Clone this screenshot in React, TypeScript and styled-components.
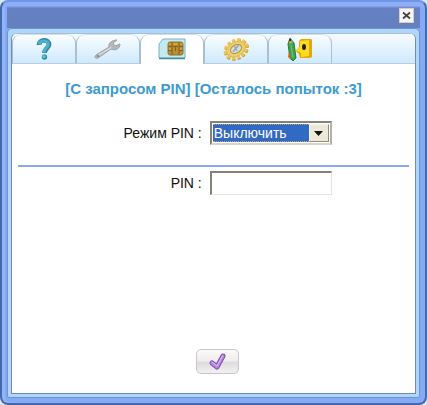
import React, { useState } from "react";
import styled, { createGlobalStyle } from "styled-components";

const GlobalStyle = createGlobalStyle`
  * { box-sizing: border-box; }
  html, body { margin: 0; background: #dfe6ee; }
  body, button, input, select { font-family: "Liberation Sans", Arial, sans-serif; }
`;

const Window = styled.main`
  display: flex;
  flex-direction: column;
  min-height: 100vh;
  padding: 0 5px 5px;
  border: 2px solid #416aaa;
  border-top-color: #6e96e4;
  border-radius: 8px;
  background: #86a9f5;
  box-shadow: inset 0 4px 1px #8eaef8, inset 3px 0 1px #94b4fa;
`;

const TitleBar = styled.header`
  display: flex;
  flex: none;
  align-items: flex-end;
  justify-content: flex-end;
  height: 26px;
  padding: 0 6px 5px;
  background: linear-gradient(#8eaef8 0, #8eaef8 4px, #6581c3 6px, #6480bf 100%);
`;

const CloseButton = styled.button`
  display: grid;
  place-items: center;
  width: 15px;
  height: 15px;
  padding: 0;
  border: 1px solid #d4d0c8;
  background: #f7f6f4;
`;

const Frame = styled.div`
  display: flex;
  flex: 1;
  flex-direction: column;
  padding: 4px 3px 3px;
  border: 1px solid #6f93d2;
  border-radius: 5px 5px 2px 2px;
  background: #afd7fb;
`;

const Panel = styled.div`
  display: flex;
  flex: 1;
  flex-direction: column;
  overflow: hidden;
  border: 1px solid #7788b4;
  border-top-color: #a9bfd0;
  border-radius: 6px 6px 0 0;
  background: #fff;
`;

const TabBar = styled.div`
  display: flex;
  flex: none;
  height: 30px;
  background: linear-gradient(#f5fbff, #cfe9fc);
  box-shadow: inset 0 -1px #b6cfe3;
`;

const Tab = styled.button<{ $active: boolean }>`
  display: grid;
  flex: 0 0 64px;
  place-items: center;
  padding: 0 0 1px;
  border: 1px solid #a9bfd2;
  border-top-color: #d3e0e9;
  border-bottom: ${(p) => (p.$active ? "0" : "1px solid #b6cfe3")};
  border-radius: 9px 9px 0 0;
  background: ${(p) => (p.$active ? "#fff" : "linear-gradient(#f9fdff, #cfe9fc)")};
`;

const Form = styled.form`
  display: flex;
  flex: 1;
  flex-direction: column;
  padding: 17px 6px 19px;
`;

const Heading = styled.h1`
  margin: 0 0 24px;
  color: #3d9bd0;
  font-size: 15px;
  font-weight: 700;
  line-height: 16px;
  text-align: center;
  white-space: nowrap;
`;

const Field = styled.div`
  display: grid;
  grid-template-columns: 47% 122px;
  column-gap: 8px;
  align-items: center;
`;

const Label = styled.label`
  color: #111;
  font-size: 14px;
  line-height: 20px;
  text-align: right;
  white-space: nowrap;
`;

const Divider = styled.hr`
  width: 100%;
  height: 2px;
  margin: 20px 0 4px;
  border: 0;
  background: #8ca8f0;
`;

const SelectBox = styled.div`
  display: grid;
  grid-template-columns: 1fr 20px;
  height: 24px;
  padding: 1px;
  border: 2px solid #858078;
  border-right-color: #b5b1a5;
  border-bottom-color: #d8d5c9;
  background: #fff;
`;

const Select = styled.select`
  grid-area: 1 / 1 / 2 / 3;
  width: 100%;
  height: 18px;
  padding: 0 22px 0 1px;
  border: 1px dotted #c2a468;
  border-width: 1px 0;
  outline: 0;
  border-radius: 0;
  appearance: none;
  background: #316ac5;
  color: #fff;
  font-size: 14px;
  line-height: 16px;
  option { background: #fff; color: #111; }
`;

const Arrow = styled.span`
  display: grid;
  grid-area: 1 / 2 / 2 / 3;
  place-items: center;
  height: 18px;
  border: 1px solid #f6f4ee;
  border-right-color: #918d82;
  border-bottom-color: #918d82;
  background: #ece9d8;
  pointer-events: none;
`;

const TextInput = styled.input`
  width: 100%;
  height: 24px;
  padding: 0 4px;
  border: 2px solid #858078;
  border-right: 1px solid #e7e5da;
  border-bottom: 1px solid #e7e5da;
  border-radius: 0;
  background: #fff;
  font-size: 14px;
`;

const Actions = styled.div`
  display: flex;
  justify-content: center;
  margin-top: auto;
  padding-left: 8px;
`;

const Submit = styled.button`
  display: grid;
  place-items: center;
  width: 43px;
  height: 25px;
  padding: 0;
  border: 1px solid #c9c6c9;
  border-radius: 5px;
  background: linear-gradient(#fafafa, #eeeced 48%, #dedbde 54%, #f2f1f2);
`;

const QuestionIcon = () => (
  <svg width="16" height="22" viewBox="0 0 16 22" fill="none" aria-hidden="true">
    <path d="M3 7C3 1 13 1 13 6.500C13 10 8.500 10.500 8.500 15" stroke="#35849f" strokeWidth="4.800" />
    <path d="M3 6.300C4 2 12 2 12.300 6.300C12 9.500 8 10 8 14.500" stroke="#4cb3cf" strokeWidth="3" />
    <circle cx="8.500" cy="19" r="2.700" fill="#2d8fae" />
    <circle cx="8" cy="18.500" r="1.500" fill="#62c5dd" />
  </svg>
);

const WrenchIcon = () => (
  <svg width="28" height="22" viewBox="0 0 28 22" aria-hidden="true">
    <path d="M2 17L15 9C14 5 18 2 23 2L19 5L21 8L26 6C26 11 21 13 17 11L4 20C1 21 0 19 2 17Z" fill="#b6b9ba" stroke="#9da1a4" />
    <path d="M4 17.500L17 9.500" stroke="#dfe0e0" strokeWidth="1.400" />
    <circle cx="4" cy="18" r="1" fill="#777d82" />
  </svg>
);

const SimIcon = () => (
  <svg width="28" height="22" viewBox="0 0 28 22" aria-hidden="true">
    <path d="M5 1H27V20H1V6Z" fill="#c5e9f1" stroke="#73b4c0" />
    <path d="M1 20.500H27" stroke="#438e9b" strokeWidth="1.500" />
    <rect x="10" y="4" width="15" height="13" rx="2" fill="#bb8f2f" stroke="#8d7431" />
    <path d="M10 8.500H14M10 12.500H14M21 8.500H25M21 12.500H25M14 4V17M21 4V17M15 8.500H20M17.500 8.500V13" fill="none" stroke="#7f6121" />
    <path d="M11 6H13M15 6H20M22 6H24M11 11H13M22 11H24" stroke="#ddb850" />
  </svg>
);

const GearIcon = () => (
  <svg width="28" height="24" viewBox="0 0 28 24" aria-hidden="true">
    <g transform="rotate(-28 14 12)">
      <ellipse cx="14" cy="13" rx="11" ry="8" fill="none" stroke="#c0953b" strokeWidth="4" strokeDasharray="3 2" />
      <ellipse cx="14" cy="12" rx="11" ry="8" fill="none" stroke="#edc654" strokeWidth="4" strokeDasharray="3 2" />
      <ellipse cx="14" cy="12" rx="10" ry="7" fill="#f0cf66" stroke="#e3b94c" />
      <ellipse cx="14" cy="12" rx="6" ry="4" fill="#d3dfe1" stroke="#a9935a" />
      <path d="M10 13L18 10M14 9V14" stroke="#9ba7ac" strokeWidth="1.500" />
    </g>
  </svg>
);

const ToolsIcon = () => (
  <svg width="26" height="26" viewBox="0 0 26 26" aria-hidden="true">
    <path d="M12 5L14 3H24L25 4V21L23 22H13L12 18L9 15L12 11Z" fill="#e9a50a" />
    <path d="M13 5L22 4V20L14 21V17L9 14L13 11Z" fill="#ffdc1c" />
    <ellipse cx="17" cy="11" rx="2" ry="3" fill="#20251b" />
    <path d="M1 8L3 2L7 7L9 22L6 25L3 22Z" fill="#3fa34b" stroke="#267d37" />
    <path d="M2 8L3 2L6 7Z" fill="#c2a26c" />
    <path d="M3 3V5" stroke="#303930" strokeWidth="2" />
    <path d="M4 9L6 22" stroke="#70c676" />
    <path d="M2 14L4 24L1 21Z" fill="#d16639" />
  </svg>
);

const CheckIcon = () => (
  <svg width="20" height="20" viewBox="0 0 20 20" fill="none" strokeLinejoin="round" strokeLinecap="round" aria-hidden="true">
    <path d="M4 11L9 15L15 4" stroke="#8150aa" strokeWidth="5" />
    <path d="M4 11L9 15L15 4" stroke="#b786df" strokeWidth="3" />
    <path d="M4 10L9 14L14.500 4" stroke="#dfbdf3" />
  </svg>
);

const tabs = [
  { label: "Справка", Icon: QuestionIcon },
  { label: "Настройки", Icon: WrenchIcon },
  { label: "SIM", Icon: SimIcon },
  { label: "Параметры", Icon: GearIcon },
  { label: "Инструменты", Icon: ToolsIcon },
];

export default function App() {
  const [active, setActive] = useState(2);
  return (
    <>
      <GlobalStyle />
      <Window>
        <TitleBar>
          <CloseButton type="button" aria-label="Закрыть">
            <svg width="9" height="9" viewBox="0 0 9 9" aria-hidden="true">
              <path d="M1 1.500L8 7.500M8 1.500L1 7.500" stroke="#493f40" strokeWidth="1.700" />
            </svg>
          </CloseButton>
        </TitleBar>
        <Frame>
          <Panel>
            <TabBar role="tablist">
              {tabs.map(({ label, Icon }, i) => (
                <Tab key={label} type="button" role="tab" aria-label={label} aria-selected={i === active} $active={i === active} onClick={() => setActive(i)}>
                  <Icon />
                </Tab>
              ))}
            </TabBar>
            <Form onSubmit={(e) => e.preventDefault()}>
              <Heading>[С запросом PIN] [Осталось попыток :3]</Heading>
              <Field>
                <Label htmlFor="mode">Режим PIN :</Label>
                <SelectBox>
                  <Select id="mode" defaultValue="off">
                    <option value="off">Выключить</option>
                    <option value="on">Включить</option>
                  </Select>
                  <Arrow>
                    <svg width="9" height="5" viewBox="0 0 9 5" aria-hidden="true"><path d="M0 0H9L4.500 5Z" fill="#111" /></svg>
                  </Arrow>
                </SelectBox>
              </Field>
              <Divider />
              <Field>
                <Label htmlFor="pin">PIN :</Label>
                <TextInput id="pin" type="text" />
              </Field>
              <Actions>
                <Submit type="submit" aria-label="Подтвердить"><CheckIcon /></Submit>
              </Actions>
            </Form>
          </Panel>
        </Frame>
      </Window>
    </>
  );
}
